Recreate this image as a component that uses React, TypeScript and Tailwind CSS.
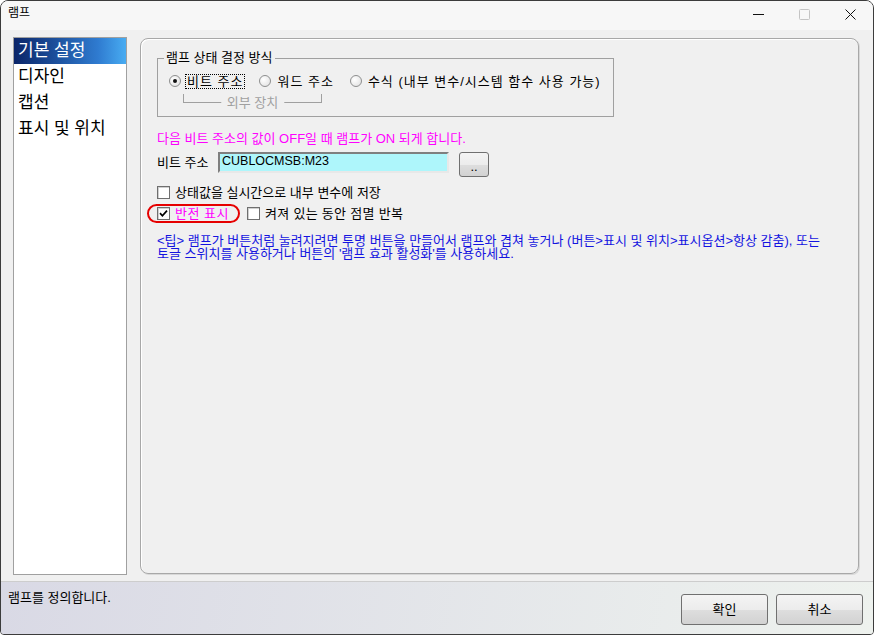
import React from 'react';

const FONT = "font-['Liberation_Sans','Noto_Sans_CJK_KR',sans-serif]";

function Radio({ checked }: { checked?: boolean }) {
  return (
    <span className="w-[12px] h-[12px] rounded-full border border-[#8e8f8f] bg-[radial-gradient(circle_at_35%_35%,#ffffff,#dedede)] flex items-center justify-center shrink-0">
      {checked && <span className="w-[4px] h-[4px] rounded-full bg-[#111]" />}
    </span>
  );
}

function Check({ checked }: { checked?: boolean }) {
  return (
    <span className="w-[13px] h-[13px] border border-[#6f6f6f] bg-white shadow-[inset_1px_1px_0_#cfcfcf] flex items-center justify-center shrink-0">
      {checked && (
        <svg width="9" height="9" viewBox="0 0 9 9">
          <path d="M1 4.2 L3.4 6.8 L8 1.6" stroke="#000" strokeWidth="1.7" fill="none" />
        </svg>
      )}
    </span>
  );
}

function Button({ label, className = '' }: { label: string; className?: string }) {
  return (
    <button
      className={`border border-[#707070] rounded-[3px] bg-[linear-gradient(#f4f4f4_0%,#ececec_50%,#dedede_51%,#d2d2d2_100%)] flex items-center justify-center leading-[13px] ${className}`}
    >
      {label}
    </button>
  );
}

export default function App() {
  const menu = ['기본 설정', '디자인', '캡션', '표시 및 위치'];

  return (
    <div
      className={`w-[874px] h-[635px] flex flex-col bg-[#f0f0f0] border border-[#3c3c3c] rounded-t-[8px] rounded-b-[4px] overflow-hidden text-[13px] text-black ${FONT}`}
    >
      {/* Title bar */}
      <div className="h-[29px] shrink-0 flex items-start bg-[#f7f7f7]">
        <span className="flex-1 pl-[7px] pt-[6px] text-[12px] leading-[12px]">램프</span>
        <div className="flex">
          <div className="w-[46px] h-[26px] flex items-center justify-center">
            <svg width="11" height="11" viewBox="0 0 11 11">
              <path d="M0 5.5 H11" stroke="#111" strokeWidth="1" />
            </svg>
          </div>
          <div className="w-[46px] h-[26px] flex items-center justify-center">
            <svg width="11" height="11" viewBox="0 0 11 11">
              <rect x="0.5" y="0.5" width="10" height="10" rx="1" stroke="#c4c4c4" fill="none" />
            </svg>
          </div>
          <div className="w-[46px] h-[26px] flex items-center justify-center">
            <svg width="11" height="11" viewBox="0 0 11 11">
              <path d="M0.5 0.5 L10.5 10.5 M10.5 0.5 L0.5 10.5" stroke="#111" strokeWidth="1" />
            </svg>
          </div>
        </div>
      </div>

      {/* Body */}
      <div className="flex-1 min-h-0 flex pl-[12px] pr-[14px] pt-[7px] pb-[6px] gap-[13px]">
        {/* Left menu */}
        <div className="w-[114px] shrink-0 bg-white border border-[#a0a0a0]">
          {menu.map((m, i) => (
            <div
              key={m}
              className={`h-[26px] pl-[4px] text-[17px] leading-[26px] ${
                i === 0 ? 'bg-[linear-gradient(90deg,#0a2569,#2f7bd0_75%,#48acf2)] text-white' : ''
              }`}
            >
              {m}
            </div>
          ))}
        </div>

        {/* Settings panel */}
        <div className="flex-1 my-[1px] rounded-[8px] border border-[#a8a8a8] shadow-[inset_1px_1px_0_#ffffff,1px_1px_0_#d8d8d8] pl-[16px] pt-[12px]">
          <fieldset className="w-[457px] border border-[#a0a0a0] pb-[13px]">
            <legend className="ml-[6px] px-[2px] leading-[14px]">램프 상태 결정 방식</legend>
            <div className="pl-[11px] mt-[8px]">
              <div className="flex items-center h-[16px] tracking-[1px]">
                <Radio checked />
                <span className="ml-[4px] px-[1px] border border-dotted border-black leading-[13px]">비트 주소</span>
                <span className="ml-[14px]">
                  <Radio />
                </span>
                <span className="ml-[4px] px-[1px] border border-transparent leading-[13px]">워드 주소</span>
                <span className="ml-[14px]">
                  <Radio />
                </span>
                <span className="ml-[4px] px-[1px] border border-transparent leading-[13px] whitespace-nowrap">
                  수식 (내부 변수/시스템 함수 사용 가능)
                </span>
              </div>
              <div className="relative ml-[14px] mt-[5px] w-[139px] h-[9px] border-l border-r border-b border-[#a0a0a0]">
                <span className="absolute left-1/2 bottom-0 -translate-x-1/2 translate-y-1/2 bg-[#f0f0f0] px-[6px] leading-[13px] text-[#a0a0a0] whitespace-nowrap">
                  외부 장치
                </span>
              </div>
            </div>
          </fieldset>

          <p className="mt-[14px] leading-[16px] text-[#ff00ff]">다음 비트 주소의 값이 OFF일 때 램프가 ON 되게 합니다.</p>

          <div className="mt-[5px] flex items-start h-[25px]">
            <span className="h-[21px] w-[61px] flex items-center leading-[13px]">비트 주소</span>
            <div className="w-[231px] h-[21px] border-2 border-t-[#7f7f7f] border-l-[#7f7f7f] border-b-[#e8e8e8] border-r-[#e8e8e8] bg-[#aef6fb] pl-[2px] text-[12.5px] leading-[15px]">
              CUBLOCMSB:M23
            </div>
            <Button label=".." className="ml-[10px] w-[30px] h-[25px] pt-[4px]" />
          </div>

          <div className="mt-[7px] flex items-center h-[16px]">
            <Check />
            <span className="ml-[5px] leading-[13px]">상태값을 실시간으로 내부 변수에 저장</span>
          </div>

          <div className="mt-[5px] flex items-center h-[16px]">
            <div className="relative flex items-center">
              <span className="absolute left-[-10px] right-[-11px] top-[-3px] bottom-[-3px] border-2 border-[#e60000] rounded-[10px]" />
              <Check checked />
              <span className="ml-[5px] leading-[13px] text-[#ff00ff] tracking-[0.5px]">반전 표시</span>
            </div>
            <span className="ml-[18px]">
              <Check />
            </span>
            <span className="ml-[5px] leading-[13px] tracking-[0.3px]">켜져 있는 동안 점멸 반복</span>
          </div>

          <p className="mt-[13px] leading-[13px] text-[#1414e0] whitespace-nowrap">
            &lt;팁&gt; 램프가 버튼처럼 눌려지려면 투명 버튼을 만들어서 램프와 겹쳐 놓거나 (버튼&gt;표시 및 위치&gt;표시옵션&gt;항상 감춤), 또는
            <br />
            토글 스위치를 사용하거나 버튼의 '램프 효과 활성화'를 사용하세요.
          </p>
        </div>
      </div>

      {/* Status / buttons */}
      <div className="h-[53px] shrink-0 border-t border-[#cdcdcd] bg-[linear-gradient(100deg,#d9d9e5,#eef2ee)] flex justify-between pl-[7px] pr-[10px]">
        <span className="pt-[8px] leading-[16px]">램프를 정의합니다.</span>
        <div className="flex gap-[8px] pt-[12px]">
          <Button label="확인" className="w-[87px] h-[31px]" />
          <Button label="취소" className="w-[87px] h-[31px]" />
        </div>
      </div>
    </div>
  );
}
